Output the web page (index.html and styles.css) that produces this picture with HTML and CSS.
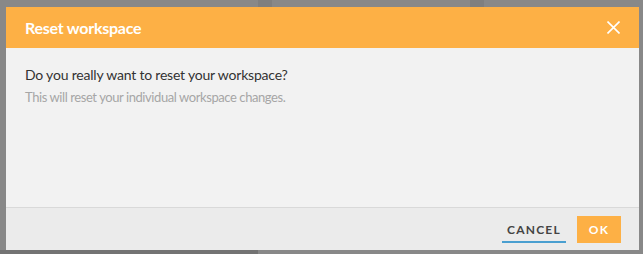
FILE: index.html
```html
<!DOCTYPE html>
<html lang="en">
<head>
    <meta charset="UTF-8">
    <title>Reset workspace</title>
    <link rel="stylesheet" href="styles.css">
</head>
<body>
<div class="backdrop">
    <div class="behind behind-top">
        <span class="col col-a"></span>
        <span class="col col-b"></span>
    </div>
    <div class="behind behind-bottom">
        <span class="shade"></span>
    </div>
    <section class="dialog">
        <header class="dialog-head">
            <h2 class="dialog-title">Reset workspace</h2>
            <a href="javascript:;" class="dialog-close">
                <svg width="13" height="13" viewBox="0 0 13 13">
                    <path d="M0.5 0.5L12.5 12.5M12.5 0.5L0.5 12.5" stroke="#fff" stroke-width="1.6" fill="none"/>
                </svg>
            </a>
        </header>
        <div class="dialog-body">
            <p class="question">Do you really want to reset your workspace?</p>
            <p class="hint">This will reset your individual workspace changes.</p>
        </div>
        <footer class="dialog-foot">
            <a href="javascript:;" class="btn btn-cancel">CANCEL</a>
            <a href="javascript:;" class="btn btn-ok">OK</a>
        </footer>
    </section>
</div>
</body>
</html>
```

FILE: styles.css
```css
html,body{ height:100%; }
body{ margin:0; background:#888; font-family:"Lato","Noto Sans",sans-serif; overflow:hidden; }
h2,p{ margin:0; }

.backdrop{ position:relative; height:100%; padding:7px 4px 0 6px; box-sizing:border-box; }
.behind-top{ position:absolute; top:0; left:0; right:0; height:7px; }
.behind-top .col{ position:absolute; top:0; height:7px; width:14px; background:#7f7f7f; }
.behind-top .col-a{ left:258px; }
.behind-top .col-b{ left:470px; }
.behind-bottom{ position:absolute; bottom:0; left:0; right:0; height:4px; }
.behind-bottom .shade{ position:absolute; left:0; top:0; width:258px; height:4px; background:#737373; }

.dialog{
    position:relative;
    width:633px;
    height:243px;
    display:flex;
    flex-direction:column;
    background:#f2f2f2;
}
.dialog-head{
    height:41px;
    background:#fdb045;
    display:flex;
    align-items:center;
    justify-content:space-between;
    padding:0 19px 0 19px;
}
.dialog-title{
    color:#fff;
    font-size:16px;
    font-weight:700;
    letter-spacing:-0.25px;
}
.dialog-close{ display:flex; }

.dialog-body{
    flex:1;
    padding:17px 19px 0;
}
.question{
    color:#333;
    font-size:14px;
    letter-spacing:-0.2px;
    line-height:20px;
}
.hint{
    color:#a6a6a6;
    font-size:13px;
    letter-spacing:-0.42px;
    line-height:18px;
    margin-top:3px;
}

.dialog-foot{
    height:42px;
    border-top:1px solid #d9d9d9;
    background:#ebebeb;
    display:flex;
    align-items:center;
    justify-content:flex-end;
    gap:11px;
    padding:0 18px;
}
.btn{
    text-decoration:none;
    font-size:12px;
    font-weight:700;
    letter-spacing:1.2px;
    display:flex;
    align-items:center;
    justify-content:center;
    height:27px;
}
.btn-cancel{
    width:64px;
    color:#444;
    box-shadow:inset 0 -2px 0 #4a9fd0;
}
.btn-ok{
    width:44px;
    color:#fff;
    background:#fdb045;
}
```
